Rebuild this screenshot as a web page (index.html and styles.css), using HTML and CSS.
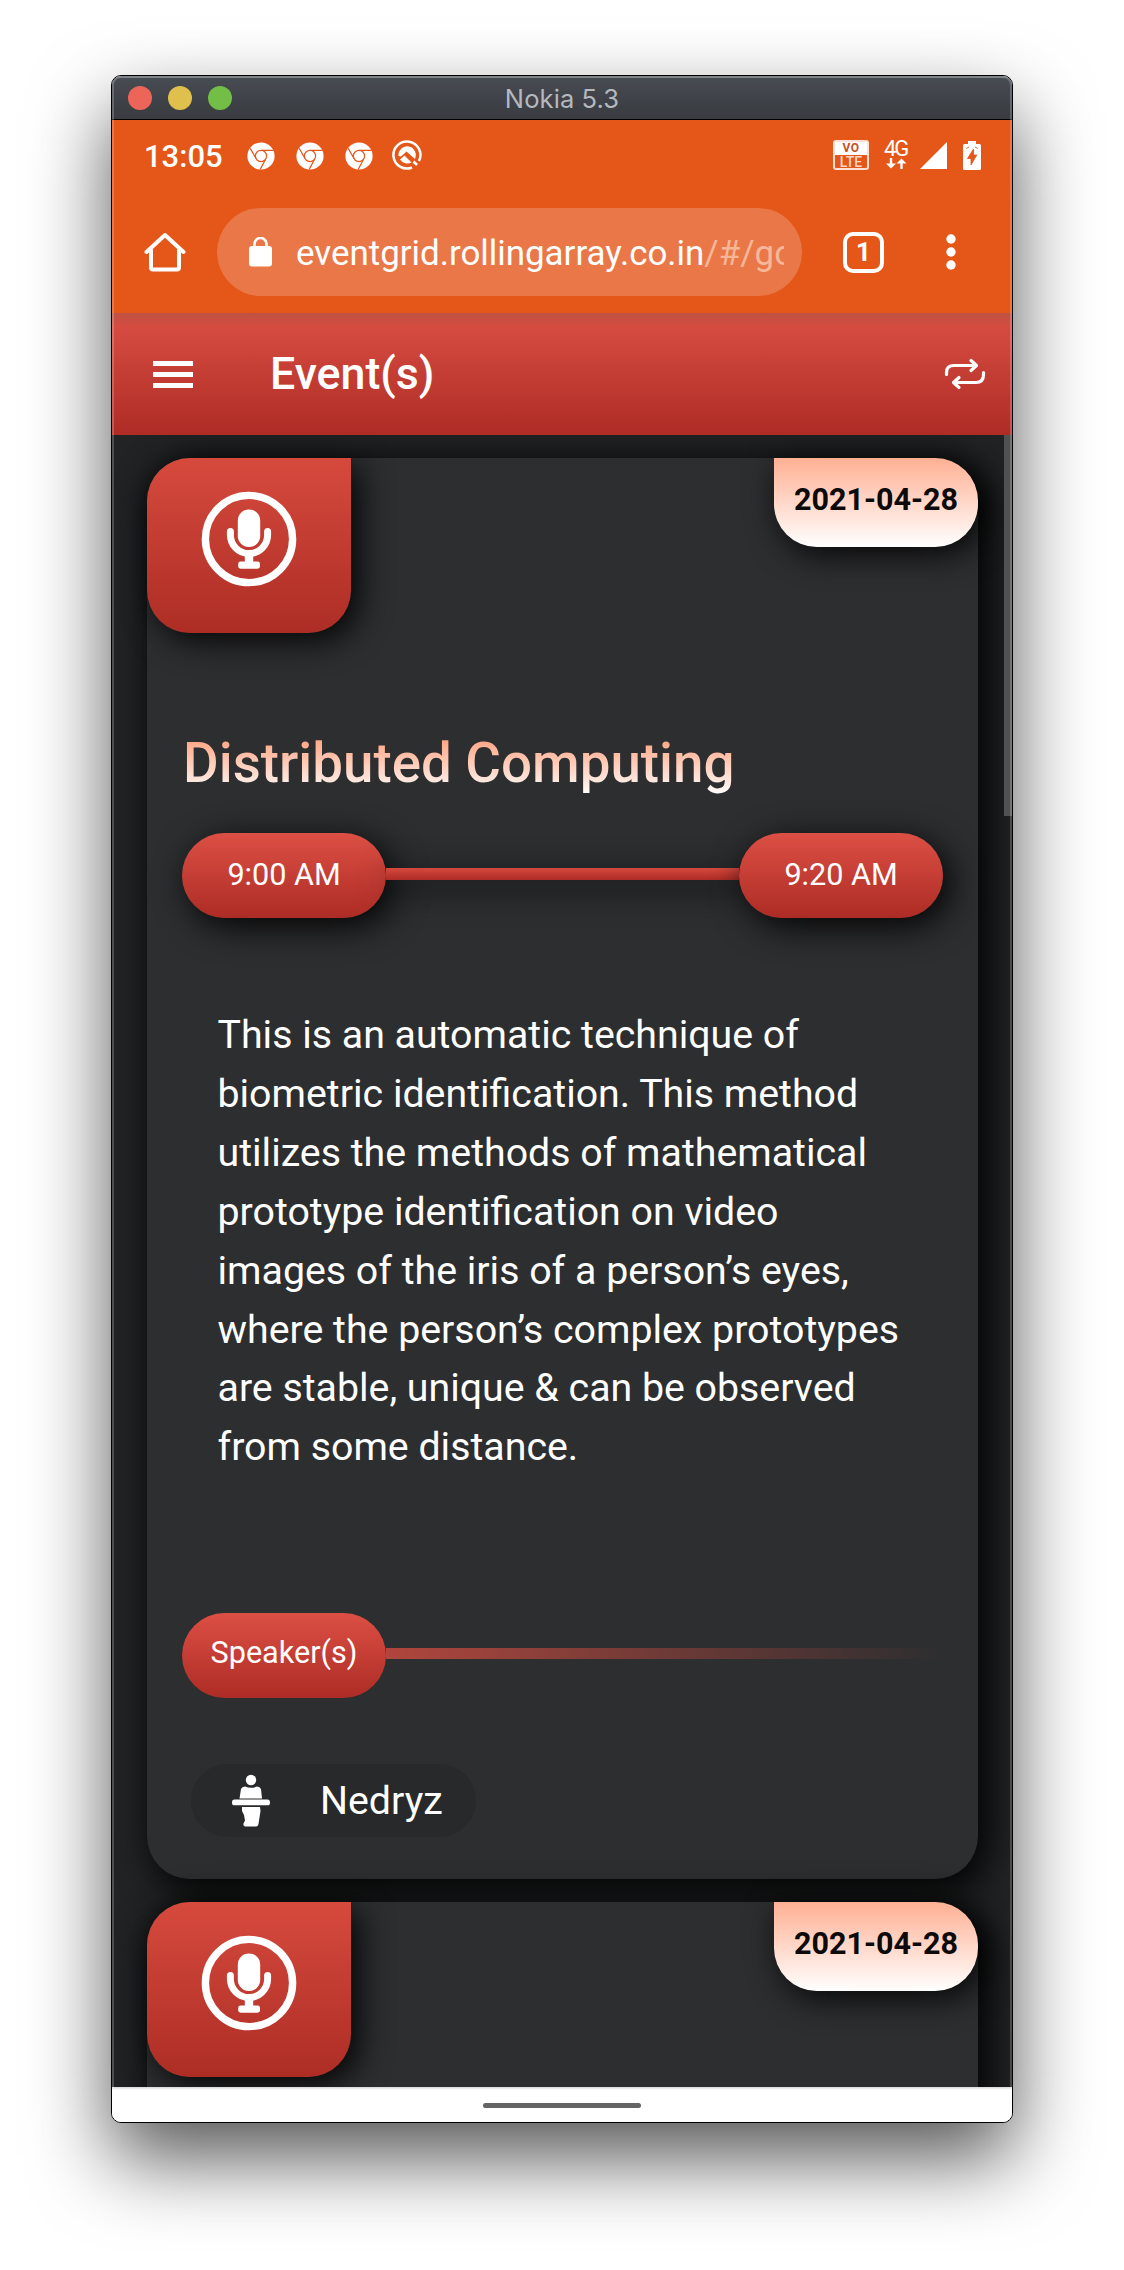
FILE: index.html
```html
<!DOCTYPE html>
<html lang="en">
<head>
<meta charset="utf-8">
<title>Nokia 5.3</title>
<link rel="stylesheet" href="styles.css">
</head>
<body>
<svg class="defs" width="0" height="0" aria-hidden="true">
  <symbol id="chrome" viewBox="0 0 28 28">
    <circle cx="14" cy="14" r="13.6" fill="#fff"/>
    <g fill="none" stroke="#e55619" stroke-width="1.2">
      <circle cx="14" cy="14" r="5.6"/>
      <path d="M14 8.4H26.6M9.15 16.8 3.2 6.4M18.85 16.8 13.2 27.4"/>
    </g>
  </symbol>
  <symbol id="mic" viewBox="-48 -48 96 96">
    <circle r="43.6" fill="none" stroke="#fff" stroke-width="7.4"/>
    <rect x="-11.2" y="-29.5" width="22.4" height="37.5" rx="11" fill="#fff"/>
    <path d="M-18.6-7.5V-4a18.6 18.6 0 0 0 37.2 0V-7.5" fill="none" stroke="#fff" stroke-width="7" stroke-linecap="round"/>
    <path d="M0 16V24" stroke="#fff" stroke-width="8.4"/>
    <rect x="-10.8" y="22.5" width="21.8" height="7.2" rx="2.4" fill="#fff"/>
  </symbol>
</svg>
<main class="window">
  <header class="titlebar">
    <span class="lights"><i class="light close"></i><i class="light min"></i><i class="light max"></i></span>
    <span class="window-title">Nokia 5.3</span>
  </header>

  <section class="status">
    <span class="clock">13:05</span>
    <svg class="notif" width="28" height="28"><use href="#chrome"/></svg>
    <svg class="notif" width="28" height="28"><use href="#chrome"/></svg>
    <svg class="notif" width="28" height="28"><use href="#chrome"/></svg>
    <svg class="target" width="32" height="32" viewBox="0 0 32 32">
      <path d="M21 28.500A13.500 13.500 0 1 1 28 22" fill="none" stroke="#fff" stroke-width="2.500"/>
      <path d="M7.500 17a8.700 8.700 0 1 1 16.400 3L15.500 12.500 10 17.500Z" fill="#fff"/>
      <path d="M9 20.500l4.500-4 7 7a9 9 0 0 1-11.500-3Z" fill="#fff"/>
      <path d="M22.500 22.500l3.500 3.500" stroke="#fff" stroke-width="2.600"/>
    </svg>
    <span class="signals">
      <span class="volte"><b>VO</b><em>LTE</em></span>
      <span class="network">
        <span>4G</span>
        <svg width="22" height="11" viewBox="0 0 22 11"><path d="M6 0V6.5M16.500 11V4" stroke="#fff" stroke-width="2.4" fill="none"/><path d="M1 5.500H11L6 10.500ZM11.500 5.500H21.500L16.500.5Z" fill="#fff"/></svg>
      </span>
      <svg class="bars" width="27" height="27" viewBox="0 0 27 27"><path d="M27 0V27H0Z" fill="#fff"/></svg>
      <svg class="battery" width="18" height="29" viewBox="0 0 18 29">
        <path d="M5 0h8v3h3.500Q18 3 18 4.500V27.500Q18 29 16.500 29H1.500Q0 29 0 27.500V4.500Q0 3 1.500 3H5Z" fill="#fff"/>
        <path d="M10.500 8 4.500 17.500H8V24L13.800 14H10.500ZM3 7.500l3-1.500M15 7.500 12 6" fill="#e55619" stroke="#e55619" stroke-width=".8"/>
      </svg>
    </span>
  </section>

  <section class="browser">
    <svg class="home" width="42" height="42" viewBox="0 0 42 42"><path d="M2.500 21 21 4 39.500 21M7 19V36.500Q7 38.500 9 38.500H33Q35 38.500 35 36.500V19" fill="none" stroke="#fff" stroke-width="4" stroke-linejoin="round" stroke-linecap="round"/></svg>
    <div class="address">
      <svg width="23" height="30" viewBox="0 0 23 30"><path d="M5.500 10V7a6 6 0 0 1 12 0V10" fill="none" stroke="#fff" stroke-width="2.600"/><rect y="9" width="23" height="20.500" rx="3" fill="#fff"/></svg>
      <div class="url">eventgrid.rollingarray.co.in<span>/#/go</span></div>
    </div>
    <span class="tabs">1</span>
    <svg class="more" width="10" height="36" viewBox="0 0 10 36" fill="#fff"><circle cx="5" cy="5" r="4.700"/><circle cx="5" cy="18" r="4.700"/><circle cx="5" cy="31" r="4.700"/></svg>
  </section>

  <nav class="toolbar">
    <span class="menu"><i></i><i></i><i></i></span>
    <h1>Event(s)</h1>
    <svg class="repeat" width="42" height="32" viewBox="0 0 42 32" fill="none" stroke="#fff" stroke-width="3.200" stroke-linecap="round" stroke-linejoin="round"><path d="M2.500 16.500V14.500Q2.500 7.500 10 7.500H32M27 2.500 32.500 7.500 27 12.500M39.500 14.500V16.500Q39.500 24.500 32 24.500H10M15 19.500 9.500 24.500 15 29.500"/></svg>
  </nav>

  <section class="events">
    <article class="card">
      <div class="card-head">
        <div class="badge"><svg width="96" height="96"><use href="#mic"/></svg></div>
        <div class="date">2021-04-28</div>
      </div>
      <h2>Distributed Computing</h2>
      <div class="timeline">
        <span class="pill raised">9:00 AM</span>
        <i class="rail"></i>
        <span class="pill raised">9:20 AM</span>
      </div>
      <p>This is an automatic technique of<br>biometric identification. This method<br>utilizes the methods of mathematical<br>prototype identification on video<br>images of the iris of a person’s eyes,<br>where the person’s complex prototypes<br>are stable, unique &amp; can be observed<br>from some distance.</p>
      <div class="speakers">
        <span class="pill">Speaker(s)</span>
        <i class="fade"></i>
      </div>
      <div class="chip">
        <svg width="38" height="54" viewBox="0 0 38 54" fill="#fff"><circle cx="19" cy="6" r="5.200"/><path d="M7.500 24.500 9 15Q10 12.500 13 12.500 19 15 25 12.500 28 12.500 29 15L30 24.500Z"/><rect y="25.500" width="38" height="5.800" rx="2.600"/><path d="M10 33H28L28.500 37 26.500 50Q26 52.500 24 52.500H13Q11 52 11.500 49.500L13 46.500 12 41 10 37Z"/></svg>
        <span>Nedryz</span>
      </div>
    </article>
    <article class="card">
      <div class="card-head">
        <div class="badge"><svg width="96" height="96"><use href="#mic"/></svg></div>
        <div class="date">2021-04-28</div>
      </div>
      <div class="rest"></div>
    </article>
    <i class="scrollbar"></i>
  </section>

  <footer class="gesture"><i></i></footer>
</main>
</body>
</html>
```
FILE: styles.css
```css
* { box-sizing: border-box; }
body {
  margin: 0;
  height: 2270px;
  padding: 75px 0 0 111px;
  background: #fff;
  overflow: hidden;
  color: #fff;
  font-family: Roboto, sans-serif;
}
svg { display: block; flex: none; }
.defs { position: absolute; }

.window {
  position: relative;
  width: 902px;
  height: 2048px;
  border: 1px solid #000;
  border-radius: 10px;
  overflow: hidden;
  display: flex;
  flex-direction: column;
  background: #fff;
  box-shadow: 0 36px 80px rgba(0, 0, 0, .66);
}
/* light rim along the window edge */
.window::after {
  content: "";
  position: absolute;
  inset: 0;
  border: 2px solid rgba(255, 255, 255, .2);
  border-bottom: 0;
  border-radius: 9px;
}

.titlebar {
  position: relative;
  flex: none;
  height: 44px;
  padding-top: 2px;
  display: flex;
  align-items: center;
  justify-content: center;
  background: linear-gradient(#484c53, #383b40);
  border-bottom: 1px solid #000;
  box-shadow: inset 0 2px rgba(255, 255, 255, .14);
}
.lights { position: absolute; left: 16px; top: 10px; display: flex; gap: 16px; }
.light { width: 24px; height: 24px; border-radius: 50%; }
.close { background: #ed6559; }
.min { background: #e0c04c; }
.max { background: #72be47; }
.window-title { font: 400 25.500px/30px Inter, sans-serif; letter-spacing: .1px; color: #b5b8be; }

.status {
  flex: none;
  height: 72px;
  padding: 0 31px 0 32px;
  display: flex;
  align-items: center;
  background: #e55619;
}
.clock { width: 103px; font-size: 31px; font-weight: 500; padding-top: 1px; }
.notif { margin-right: 21px; }
.target { margin-left: -3px; margin-top: -2px; }
.signals { margin-left: auto; display: flex; align-items: center; margin-top: -2px; }
.volte {
  width: 36px;
  height: 30px;
  border: 2px solid #fbe0d4;
  border-radius: 3px;
  display: flex;
  flex-direction: column;
  text-align: center;
  font-size: 14px;
  line-height: 13px;
}
.volte b { background: #fff; color: #c8501c; height: 13px; letter-spacing: .5px; font-size: 12px; }
.volte em { font-style: normal; font-weight: 500; color: #fbd9ca; line-height: 14px; }
.network { margin-left: 16px; width: 25px; font-size: 22px; line-height: 16px; letter-spacing: -2px; white-space: nowrap; }
.network span { display: block; margin: 0 0 1px -1px; }
.bars { margin-left: 10px; }
.battery { margin-left: 16px; }

.browser {
  flex: none;
  height: 121px;
  padding: 0 56px 1px 32px;
  display: flex;
  align-items: center;
  background: #e55619;
}
.address {
  margin-left: 31px;
  width: 585px;
  height: 88px;
  padding: 0 18px 0 32px;
  border-radius: 44px;
  display: flex;
  align-items: center;
  gap: 24px;
  background: #ea7748;
}
.url { flex: 1; overflow: hidden; white-space: nowrap; font-size: 34.900px; line-height: 46px; padding-top: 4px; }
.url span { color: #f6b799; }
.tabs {
  margin-left: 41px;
  width: 41px;
  height: 41px;
  border: 4px solid #fff;
  border-radius: 10px;
  font-size: 26px;
  font-weight: 700;
  line-height: 33px;
  text-align: center;
}
.more { margin-left: auto; }

.toolbar {
  flex: none;
  height: 122px;
  padding: 0 26px 0 41px;
  display: flex;
  align-items: center;
  background: linear-gradient(rgba(120, 90, 60, .28), transparent 14px), linear-gradient(#da4f44, #ae2c25);
}
.menu { width: 117px; display: grid; gap: 6px; }
.menu i { width: 40px; height: 5px; background: #fff; }
h1 { margin: 0; font-size: 44.700px; font-weight: 500; line-height: 52px; }
.repeat { margin-left: auto; }

.events {
  position: relative;
  flex: none;
  height: 1652px;
  padding: 23px 34px 0 35px;
  display: flex;
  flex-direction: column;
  gap: 23px;
  overflow: hidden;
  background: #212324;
}
.card {
  flex: none;
  border-radius: 43px;
  background: #2d2e30;
  box-shadow: 8px 8px 36px 4px rgba(0, 0, 0, .9);
}
.card-head { display: flex; justify-content: space-between; align-items: flex-start; }
.badge {
  width: 204px;
  height: 175px;
  padding: 33px 54px 0;
  border-radius: 43px 0 43px 43px;
  background: linear-gradient(#d64a3d, #ad2d25);
  box-shadow: 8px 8px 32px rgba(0, 0, 0, .9);
}
.date {
  width: 204px;
  height: 89px;
  border-radius: 0 43px 43px 43px;
  background: linear-gradient(#ffb093, #fff);
  box-shadow: 6px 7px 32px rgba(0, 0, 0, .9);
  color: #0c0a0a;
  font-size: 30.500px;
  font-weight: 700;
  line-height: 84px;
  text-align: center;
}
h2 {
  margin: 97px 0 0 36px;
  width: 760px;
  font-size: 54.700px;
  font-weight: 500;
  line-height: 66px;
  background: linear-gradient(#ff9770, #fff);
  -webkit-background-clip: text;
  background-clip: text;
  color: transparent;
}
.timeline, .speakers { display: flex; align-items: center; padding: 0 35px; }
.timeline { margin-top: 37px; }
.pill {
  flex: none;
  width: 204px;
  height: 85px;
  border-radius: 43px;
  background: linear-gradient(#dc4f44, #ad2c25);
  font-size: 30.600px;
  line-height: 83px;
  text-align: center;
}
.speakers .pill { line-height: 80px; }
.raised { box-shadow: 7px 8px 34px rgba(0, 0, 0, .95); }
.rail { flex: 1; height: 12px; margin-top: -3px; background: linear-gradient(#d64a3f, #ad2c25); box-shadow: 7px 8px 34px rgba(0, 0, 0, .8); }
p { margin: 88px 0 0 70.500px; font-size: 39.300px; line-height: 58.900px; white-space: nowrap; }
.speakers { margin-top: 136px; }
.fade { flex: 1; height: 11px; margin-top: -4px; background: linear-gradient(90deg, #b0463d, rgba(176, 70, 61, 0)); }
.chip {
  margin: 66px 0 42px 44px;
  width: 285px;
  height: 73px;
  padding-left: 41px;
  border-radius: 37px;
  display: flex;
  align-items: center;
  gap: 50px;
  background: #28292b;
  font-size: 39.300px;
}
.rest { height: 400px; }
.scrollbar { position: absolute; right: 0; top: 0; width: 8px; height: 381px; background: #505152; }

.gesture {
  flex: 1;
  display: flex;
  justify-content: center;
  padding-top: 16px;
  background: linear-gradient(#d8d8d8, #fff 3px);
}
.gesture i { width: 158px; height: 5px; border-radius: 3px; background: #646464; }
```
